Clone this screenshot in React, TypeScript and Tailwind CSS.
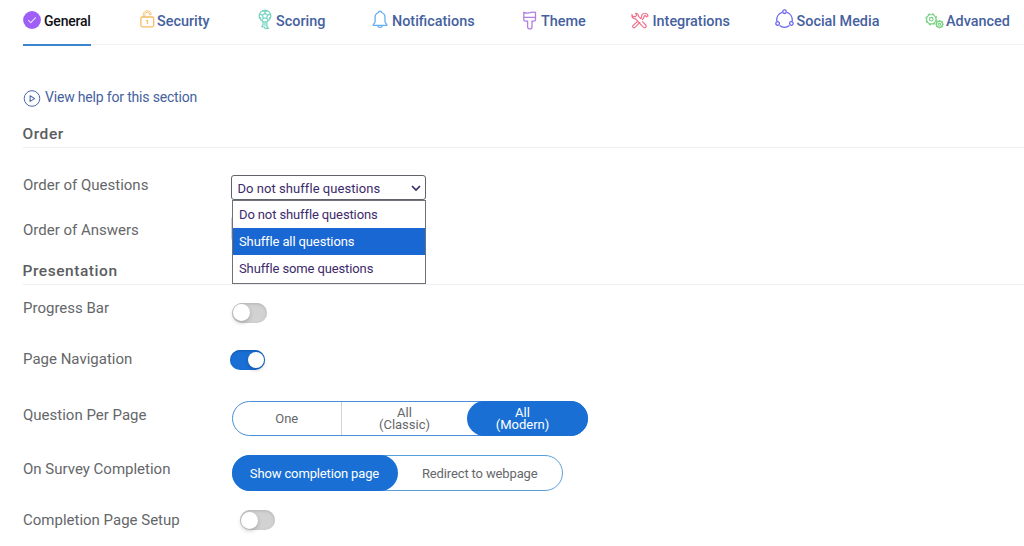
import React from 'react'
import clsx from 'clsx'

interface TabItem {
    label: string
    icon: React.ReactNode
    width: string
    iconWidth: string
    active?: boolean
}

const tabs: TabItem[] = [
    {
        label: 'General',
        width: 'w-[117px]',
        iconWidth: 'w-[21px]',
        active: true,
        icon: (
            <svg className="block" width="18" height="18" viewBox="0 0 18 18" fill="none">
                <circle cx="9" cy="9" r="8.9" fill="#9f5ef8" />
                <path d="M5.2 9.2l2.6 2.5 5-5.3" stroke="#eadcff" strokeWidth="1.1" />
            </svg>
        ),
    },
    {
        label: 'Security',
        width: 'w-[118px]',
        iconWidth: 'w-[17px]',
        icon: (
            <svg className="block -mt-[3px]" width="15" height="18" viewBox="0 0 15 18" fill="none" stroke="#f8bb66" strokeWidth="1.3">
                <rect x="0.9" y="7" width="12.8" height="9.8" rx="1.5" />
                <path d="M3.2 7V4.8C3.2 2.5 4.9.8 7.2.8s4 1.7 4 4H9.6c0-1.5-.9-2.4-2.4-2.4s-2.4 1-2.4 2.4V7" strokeWidth=".9" />
                <path d="M6 10.5h1.5v3.4M7.5 10.5v1.2" strokeWidth="1.2" />
            </svg>
        ),
    },
    {
        label: 'Scoring',
        width: 'w-[114px]',
        iconWidth: 'w-[18px]',
        icon: (
            <svg className="block -mt-[2px]" width="14" height="20" viewBox="0 0 14 20" fill="none" stroke="#78d5c3" strokeWidth="1.3">
                <circle cx="7" cy="7" r="5.8" />
                <path d="M7 4.3l2.6 1.9-1 3H5.4l-1-3zM7 4.3V1.2M9.6 6.2l3-1.1M8.6 9.2l1.8 2.7M5.4 9.2l-1.8 2.7M4.4 6.2l-3-1.1M4.6 1.7L7 2.8l2.4-1.1M1.3 8.3l2 1M12.7 8.3l-2 1" />
                <path d="M5 12.8v2.7l-1 2.2 2 .1 1.2 1.6h3l-1.4-2.2.2-4.4M7 13.2v3.5" />
            </svg>
        ),
    },
    {
        label: 'Notifications',
        width: 'w-[150.5px]',
        iconWidth: 'w-[20px]',
        icon: (
            <svg className="block -mt-[2px]" width="16" height="19" viewBox="0 0 16 19" fill="none" stroke="#66aeed" strokeWidth="1.3">
                <path d="M6.5 2.5C6.5.7 9.5.7 9.5 2.5c2.3.7 3.5 2.5 3.5 5v3.9c0 1.3.6 2 1.8 3.1v.8H1.3v-.8C2.5 13.4 3.1 12.7 3.1 11.4V7.5c0-2.5 1.2-4.3 3.4-5z" />
                <path d="M5.7 15.6c.3 2.4 4.3 2.4 4.6 0" />
            </svg>
        ),
    },
    {
        label: 'Theme',
        width: 'w-[108.5px]',
        iconWidth: 'w-[18.5px]',
        icon: (
            <svg className="block" width="14" height="19" viewBox="0 0 14 19" fill="none" stroke="#b07fe0" strokeWidth="1.3">
                <path d="M.8 1.5c3.2.9 4.4.9 6.2.2 1.8-.8 3.4-.9 5.5-.3v7.4c0 .9-.5 1.4-1.4 1.4H9v5.8c0 2.6-4.4 2.6-4.4 0v-5.8H2.2c-.9 0-1.4-.5-1.4-1.4zM.8 6.4h11.7" />
            </svg>
        ),
    },
    {
        label: 'Integrations',
        width: 'w-[144px]',
        iconWidth: 'w-[21.5px]',
        icon: (
            <svg className="block" width="18" height="17" viewBox="0 0 18 17" fill="none" stroke="#f36e8b" strokeWidth="1.15">
                <path d="M10.4 7.1L7.5 4.4c.2-1.5-.9-3.2-2.8-3.1l1 1.8-1.3 1.6-2.5-.3-.9-1.5c-.5 2 1 4.2 3.5 4l7.7 8.2c1.8 1.6 4-.5 2.5-2.1l-3.4-3.6" />
                <path d="M7.1 8.8l-5.2 4.8c-.9 1.3.6 2.8 1.9 2l5.3-5.5M9.4 6.7l1.2-1.6c-.4-1.8.8-3.7 3.2-3.8 1.2-.1 2.1.3 2.6 1.3l.6 1.3-1.6.8-1.4-1.4-1 1.6-1.6 3.2" />
            </svg>
        ),
    },
    {
        label: 'Social Media',
        width: 'w-[150px]',
        iconWidth: 'w-[21.5px]',
        icon: (
            <svg className="block -mt-[2px]" width="19" height="20" viewBox="0 0 19 20" fill="none" stroke="#6865ed" strokeWidth="1.3">
                <circle cx="9.5" cy="2.7" r="1.8" />
                <circle cx="2.6" cy="14.5" r="1.8" />
                <circle cx="16.4" cy="14.5" r="1.8" />
                <path d="M7 3.4a8 8 0 0 0-5.1 8.8M12 3.4a8 8 0 0 1 5.1 8.8M4.6 16.5a8 8 0 0 0 9.8 0" />
            </svg>
        ),
    },
    {
        label: 'Advanced',
        width: 'w-[90px]',
        iconWidth: 'w-[21px]',
        icon: (
            <svg className="block mt-px" width="19" height="16" viewBox="0 0 19 16" fill="none" stroke="#76d080" strokeWidth="1.1">
                <circle cx="6.3" cy="6.2" r="4.7" />
                <circle cx="6.3" cy="6.2" r="5.5" strokeDasharray="2.3 2.02" />
                <circle cx="6.3" cy="6.2" r="1.8" />
                <circle cx="14.5" cy="11.2" r="3.1" strokeWidth="1.3" />
                <circle cx="14.5" cy="11.2" r="1.1" />
                <path d="M14.5 7v1.2M14.5 14.3v1.2M10.4 11.2h1M17.7 11.2h1M11.6 8.2l.9.9M16.6 13.3l.9.9M17.4 8.2l-.9.9M12.4 13.3l-.9.9" />
            </svg>
        ),
    },
]

function Tabs() {
    return (
        <nav className="flex h-[46px] pl-[23px]">
            <div className="flex h-[45px] flex-1 border-b border-[#f1f2f4]">
                {tabs.map(({ label, icon, width, iconWidth, active }) => (
                    <div key={label} className={clsx('shrink-0', width)}>
                        <a
                            href="#"
                            className={clsx(
                                'inline-flex h-[46px] items-center border-b-2 pb-[4px] font-medium leading-none whitespace-nowrap',
                                active
                                    ? 'border-[#3c86cf] text-[14px] tracking-[-0.2px] text-[#101014]'
                                    : 'border-transparent text-[14.4px] text-[#4561a0]'
                            )}
                        >
                            <span className={clsx('shrink-0', iconWidth)}>{icon}</span>
                            <span className={active ? 'mt-[2px]' : 'mt-[4.5px]'}>{label}</span>
                        </a>
                    </div>
                ))}
            </div>
        </nav>
    )
}

interface RowProps {
    label: string
    className: string
    labelClass: string
    children?: React.ReactNode
}

function Row({ label, className, labelClass, children }: RowProps) {
    return (
        <div className={clsx('flex items-start', className)}>
            <div className={clsx('w-[209px] shrink-0 text-[15px] leading-5 text-[#65676a]', labelClass)}>{label}</div>
            {children}
        </div>
    )
}

function Toggle({ on, className }: { on?: boolean; className?: string }) {
    return (
        <button
            type="button"
            role="switch"
            aria-checked={!!on}
            className={clsx(
                'flex h-5 w-[35.5px] items-center rounded-full p-px',
                on
                    ? 'justify-end bg-[#196fd4] shadow-[inset_0_1px_2px_#1059b0]'
                    : 'justify-start bg-[#d2d2d2] shadow-[inset_0_1px_3px_#b4b4b4]',
                className
            )}
        >
            <span className={clsx('rounded-full bg-white shadow-[0_2px_4px_rgba(0,0,0,0.2)]', on ? 'h-4 w-4' : 'h-[17px] w-[17px]')} />
        </button>
    )
}

const options = ['Do not shuffle questions', 'Shuffle all questions', 'Shuffle some questions']

function OrderSelect() {
    return (
        <div className="relative mt-[27px] w-[195px] -ml-px text-[13px] text-[#3d2a6b]">
            <div className="flex h-[25px] items-center justify-between rounded-[3px] border border-[#62626a] bg-white pt-[2px] pr-[4px] pl-[5.5px]">
                <span className="tracking-[0.05px]">{options[0]}</span>
                <svg className="-mt-px" width="10" height="7" viewBox="0 0 10 7" fill="none" stroke="#3d2a6b" strokeWidth="1.7">
                    <path d="M1 1l4 4 4-4" />
                </svg>
            </div>
            <ul className="absolute top-[25px] left-px z-10 w-[194px] border border-[#707078] bg-white pb-px tracking-[-0.12px]">
                {options.map((option, i) => (
                    <li
                        key={option}
                        className={clsx('flex h-[27px] items-center pl-[6px]', i === 1 && 'bg-[#1967d2] text-white')}
                    >
                        {option}
                    </li>
                ))}
            </ul>
        </div>
    )
}

function SectionTitle({ className, children }: { className: string; children: React.ReactNode }) {
    return (
        <h2 className={clsx('border-b border-[#eeeeef] text-[15.5px] leading-5 font-medium tracking-[0.55px] text-[#5b5d60]', className)}>
            <span className="-ml-[0.5px]">{children}</span>
        </h2>
    )
}

export default function App() {
    return (
        <div className="h-[546px] w-full overflow-hidden bg-white font-['Roboto',sans-serif]">
            <Tabs />
            <main className="pl-[23px]">
                <a href="#" className="flex h-[73px] items-start pt-[42px] text-[14px] leading-[19px] tracking-[-0.18px] text-[#4561a0]">
                    <svg className="mt-[1.5px] mr-[4px]" width="18" height="17" viewBox="0 0 18 17" fill="none" stroke="#4c68ab">
                        <circle cx="9" cy="8.5" r="7.8" strokeWidth="1" />
                        <path d="M7.1 5.8v5.6l4.5-2.8z" strokeWidth="1.1" strokeLinejoin="round" />
                    </svg>
                    View help for this section
                </a>
                <SectionTitle className="h-[29px] pt-[5px]">Order</SectionTitle>
                <Row label="Order of Questions" className="h-[60px]" labelClass="pt-[27px]">
                    <OrderSelect />
                </Row>
                <Row label="Order of Answers" className="h-[46px]" labelClass="pt-[12px]">
                    <div className="mt-[8px] -ml-px h-[25px] w-[195px] rounded-[3px] border border-[#d0d0d4]" />
                </Row>
                <SectionTitle className="h-[31px] pt-[7px]">Presentation</SectionTitle>
                <Row label="Progress Bar" className="h-[51px]" labelClass="pt-[13px]">
                    <Toggle className="mt-[17.5px] -ml-[0.5px]" />
                </Row>
                <Row label="Page Navigation" className="h-[51px]" labelClass="pt-[13px]">
                    <Toggle on className="mt-[14px] -ml-[2.5px]" />
                </Row>
                <Row label="Question Per Page" className="h-[58px]" labelClass="pt-[18px]">
                    <div className="mt-[14px] -ml-[0.5px] flex h-[35px] w-[356.5px] rounded-full border border-[#4a8ddb] text-center text-[13px] leading-[12px] text-[#65676a]">
                        <button type="button" className="w-[109.5px] border-r border-[#cfd2d6]">One</button>
                        <button type="button" className="w-[125px]">All<br />(Classic)</button>
                        <button type="button" className="-my-px -mr-px flex-1 rounded-full bg-[#196fd4] pr-[10px] text-white">All<br />(Modern)</button>
                    </div>
                </Row>
                <Row label="On Survey Completion" className="h-[53px]" labelClass="pt-[14px]">
                    <div className="mt-[10px] -ml-[0.5px] flex h-[36px] w-[331.5px] rounded-full border border-[#5b9fd8] text-center text-[13px] tracking-[-0.14px] text-[#65676a]">
                        <button type="button" className="-my-px -ml-px w-[166px] rounded-full bg-[#196fd4] pt-px text-white">Show completion page</button>
                        <button type="button" className="flex-1 pt-px">Redirect to webpage</button>
                    </div>
                </Row>
                <Row label="Completion Page Setup" className="h-[48px]" labelClass="pt-[12px]">
                    <Toggle className="mt-[12px] ml-[7.5px]" />
                </Row>
            </main>
        </div>
    )
}
